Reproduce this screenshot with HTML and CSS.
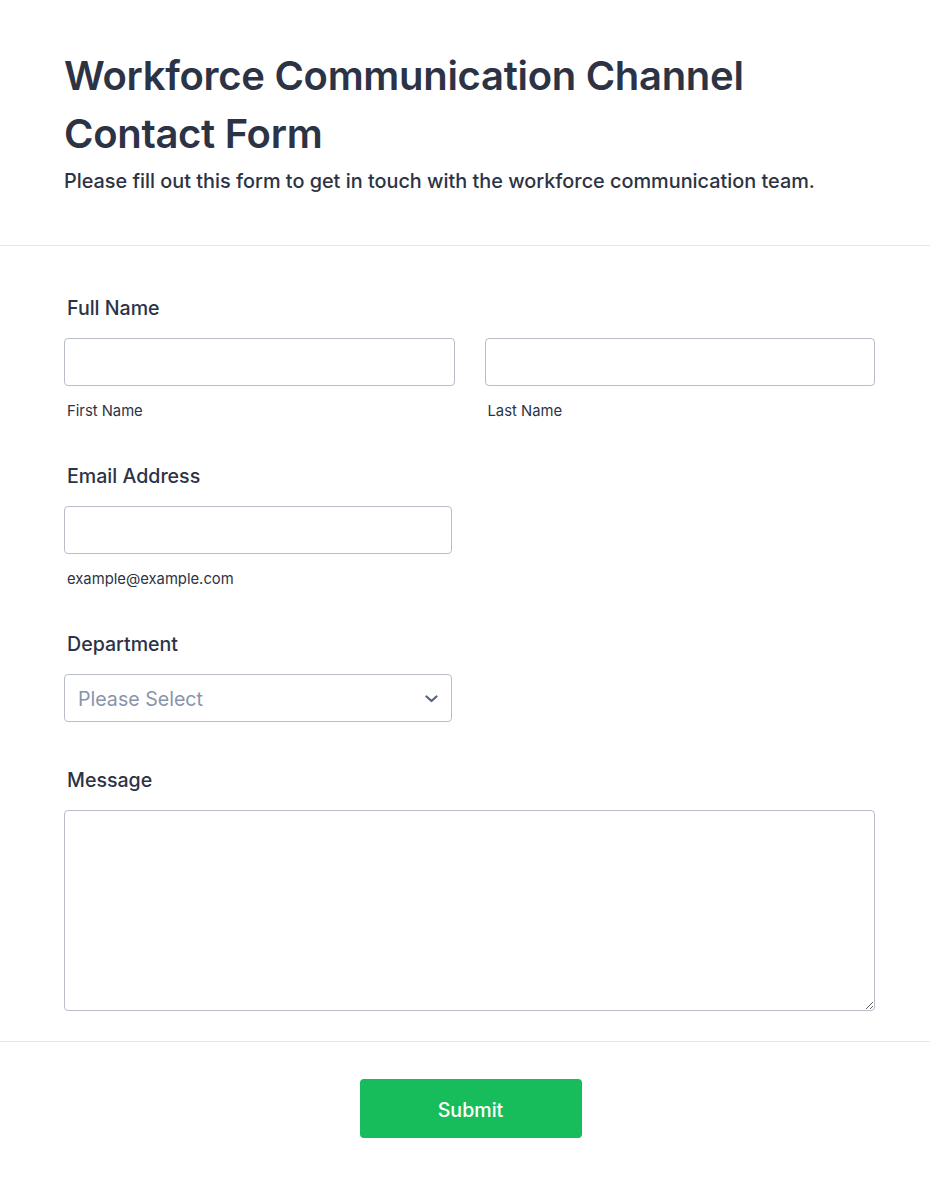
FILE: index.html
```html
<!DOCTYPE html>
<html lang="en">
<head>
<meta charset="utf-8">
<title>Workforce Communication Channel Contact Form</title>
<link rel="stylesheet" href="styles.css">
</head>
<body>
<form class="form">
  <header class="header">
    <h1 class="title">Workforce Communication Channel Contact Form</h1>
    <p class="subtitle">Please fill out this form to get in touch with the workforce communication team.</p>
  </header>
  <section class="fields">
    <div class="field">
      <label class="label">Full Name</label>
      <div class="row">
        <div class="col">
          <input class="input" type="text">
          <span class="sublabel">First Name</span>
        </div>
        <div class="col">
          <input class="input" type="text">
          <span class="sublabel">Last Name</span>
        </div>
      </div>
    </div>
    <div class="field">
      <label class="label">Email Address</label>
      <div class="half">
        <input class="input" type="email">
        <span class="sublabel">example@example.com</span>
      </div>
    </div>
    <div class="field field-dept">
      <label class="label">Department</label>
      <div class="half select-wrap">
        <div class="select">
          <span class="placeholder">Please Select</span>
          <svg class="chevron" width="13" height="8" viewBox="0 0 13 8"><path d="M1.5 1.5 L6.5 6 L11.5 1.5" fill="none" stroke="#57647e" stroke-width="2.2" stroke-linecap="round" stroke-linejoin="round"/></svg>
        </div>
      </div>
    </div>
    <div class="field">
      <label class="label">Message</label>
      <textarea class="textarea"></textarea>
    </div>
  </section>
  <footer class="footer">
    <button class="submit" type="button">Submit</button>
  </footer>
</form>
</body>
</html>
```
FILE: styles.css
```css
* { box-sizing: border-box; }
html, body { margin: 0; padding: 0; background: #fff; }
body {
  font-family: Inter, "Noto Sans", sans-serif;
  color: #2c3345;
}
.header {
  padding: 47px 55px 50px 64px;
  border-bottom: 1px solid #e3e5ea;
}
.title {
  margin: 0;
  font-size: 40px;
  line-height: 58px;
  font-weight: 600;
  letter-spacing: -0.3px;
}
.subtitle {
  margin: 4px 0 0;
  font-size: 19.85px;
  line-height: 28px;
  font-weight: 500;
}
.fields {
  padding: 48px 55px 30px 64px;
  border-bottom: 1px solid #e6e8ee;
  display: flex;
  flex-direction: column;
  gap: 41px;
}
.field { display: flex; flex-direction: column; }
.field-dept { margin-bottom: 3px; }
.label {
  font-size: 19.6px;
  line-height: 28px;
  font-weight: 500;
  padding-left: 3px;
  margin-bottom: 16px;
}
.row { display: flex; gap: 30px; }
.col { flex: 1; display: flex; flex-direction: column; }
.half { width: 388px; display: flex; flex-direction: column; }
.input {
  height: 48px;
  width: 100%;
  border: 1px solid #b8bdc9;
  border-radius: 4px;
  font: inherit;
  font-size: 16px;
  padding: 0 12px;
  background: #fff;
  outline: none;
}
.sublabel {
  margin-top: 15px;
  font-size: 14.8px;
  line-height: 20px;
  padding-left: 3px;
  color: #2c3345;
}
.select {
  height: 48px;
  border: 1px solid #b8bdc9;
  border-radius: 4px;
  display: flex;
  align-items: center;
  justify-content: space-between;
  padding: 1px 13px 0 13px;
}
.placeholder {
  font-size: 19.6px;
  color: #8894ab;
}
.chevron { display: block; }
.textarea {
  height: 201px;
  width: 100%;
  border: 1px solid #b8bdc9;
  border-radius: 4px;
  font: inherit;
  resize: vertical;
  outline: none;
}
.footer {
  padding: 37px 0 50px 11px;
  display: flex;
  justify-content: center;
}
.submit {
  width: 222px;
  height: 59px;
  padding-top: 3px;
  background: #18bd5b;
  border: none;
  border-radius: 4px;
  color: #fff;
  font-family: Inter, "Noto Sans", sans-serif;
  font-size: 19.6px;
  font-weight: 500;
}
```
